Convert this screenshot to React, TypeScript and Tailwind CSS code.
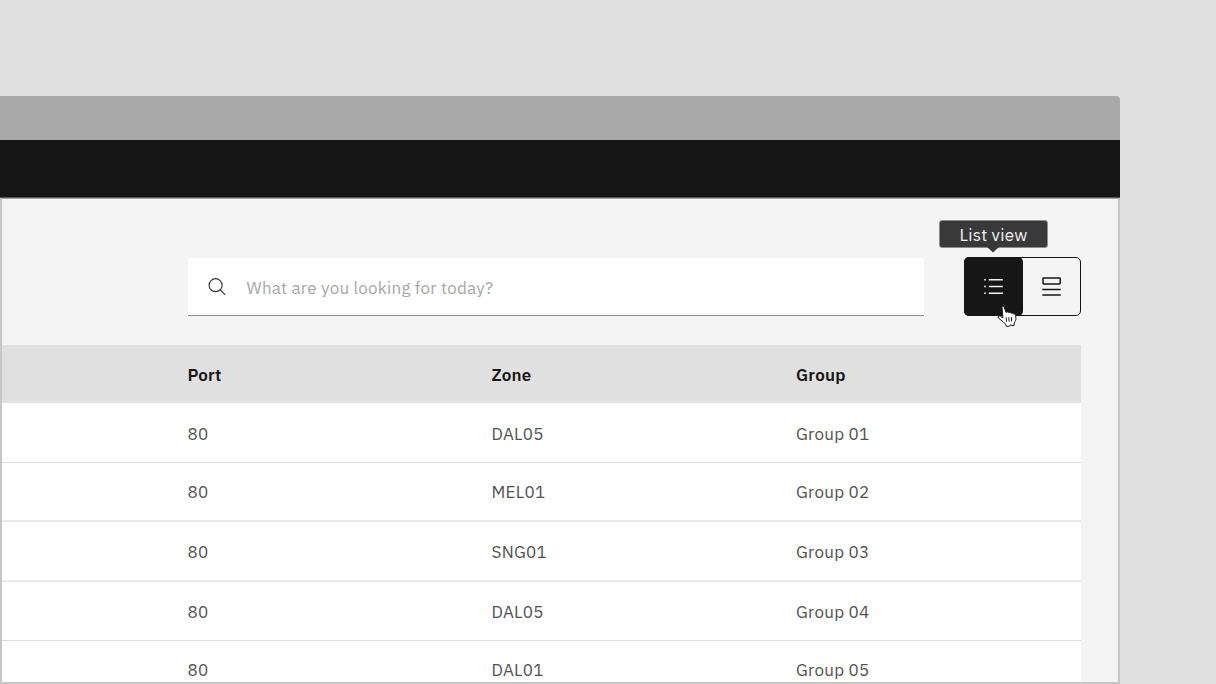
const rows = [
  { port: '80', zone: 'DAL05', group: 'Group 01', size: 'h-[60px] border-b border-[#dedede] pt-1' },
  { port: '80', zone: 'MEL01', group: 'Group 02', size: 'h-[59px] border-b-2 border-[#e9e9e9] pt-[3px]' },
  { port: '80', zone: 'SNG01', group: 'Group 03', size: 'h-[60px] border-b-2 border-[#ebebeb] pt-[3px]' },
  { port: '80', zone: 'DAL05', group: 'Group 04', size: 'h-[59px] border-b border-[#dedede] pt-[3px]' },
  { port: '80', zone: 'DAL01', group: 'Group 05', size: 'h-[59px] pt-px' },
];

function SearchIcon() {
  return (
    <svg width="20" height="20" viewBox="0 0 20 20" fill="none" stroke="#393939" strokeWidth="1.2">
      <circle cx="7.6" cy="8.2" r="6.5" />
      <path d="M12.2 12.8 17.2 17.8" />
    </svg>
  );
}

function ListIcon() {
  return (
    <svg width="20" height="20" viewBox="0 0 20 20" fill="#f4f4f4">
      <path d="M4.8 2h14v1.4h-14zM4.8 8.8h14v1.4h-14zM4.8 15.6h14V17h-14zM0.2 2h1.6v1.5H0.2zM0.2 8.8h1.6v1.5H0.2zM0.2 15.6h1.6v1.5H0.2z" />
    </svg>
  );
}

function CardIcon() {
  return (
    <svg width="20" height="20" viewBox="0 0 20 20" fill="none" stroke="#161616" strokeWidth="1.5">
      <rect x="1" y="0.9" width="17.2" height="6" rx="0.6" />
      <path d="M0.3 12.5h18.4M0.3 18h18.4" />
    </svg>
  );
}

function HandPointer() {
  return (
    <svg className="absolute left-[32px] top-[46px] z-10" width="21" height="24" viewBox="0 0 21 24">
      <path
        d="M5 3.4C4.9 2.2 6.6 1.8 7.2 3L9 8.4c.8-.8 2.1-.7 2.6.3.9-.7 2-.4 2.5.6 1-.6 2.2-.2 2.6.8.9-.3 1.7.3 1.9 1.2l.3 3c.1 1.8-.9 3-1.6 4.5l-.3 2.7-2.4.2-.8-1.1-1.2 1.6-3.3.1c-.3-2-1.6-2.9-2.8-4.2L1.4 14c-.9-1.4.5-2.7 1.9-1.8l2.6 1.7z"
        fill="#fff"
        stroke="#161616"
        strokeWidth="1"
        strokeLinejoin="round"
      />
      <path d="M9.2 13.4l.3 4.3M11.9 13.3l.2 4.3M14.5 13.2v4.3" stroke="#161616" strokeWidth="1" />
    </svg>
  );
}

export default function App() {
  return (
    <div className="h-[684px] w-[1216px] overflow-hidden bg-[#e0e0e0] pt-24 font-['IBM_Plex_Sans',Roboto,sans-serif] text-[17px]">
      <div className="flex h-[588px] w-[1120px] flex-col overflow-hidden rounded-tr-[4px]">
        <div className="h-11 shrink-0 bg-[#a8a8a8]" />
        <div className="h-[58px] shrink-0 border-b border-[#555] bg-[#161616]" />
        <main className="flex grow flex-col overflow-hidden border-2 border-t border-[#c6c6c6] border-t-[#a8a8a8] bg-[#f4f4f4]">
          <div className="flex h-[146px] shrink-0 pl-[186px] pr-[37px] pt-[58px]">
            <div className="mt-px flex h-[58px] w-[736px] items-center border-b border-[#8d8d8d] bg-white pl-5">
              <SearchIcon />
              <span className="ml-[18.5px] mt-[5px] whitespace-nowrap tracking-[0.23px] text-[#a8a8a8]">What are you looking for today?</span>
            </div>
            <div className="relative ml-10 flex h-[59px] w-[117px] rounded-[5px] border border-[#161616]">
              <button className="-my-px -ml-px flex w-[59px] items-center justify-center rounded-[5px] bg-[#161616]">
                <ListIcon />
              </button>
              <button className="flex grow items-center justify-center">
                <CardIcon />
              </button>
              <div className="absolute -left-[26px] -top-[38px] flex h-[28px] w-[109px] items-center justify-center rounded-[3px] border border-[#8d8d8d] bg-[#393939] pt-[4px] tracking-[0.25px] text-[#f4f4f4]">
                List view
                <svg className="absolute left-[47px] top-[26px]" width="12" height="6" viewBox="0 0 12 6">
                  <path d="M0 0h12L6 5.5z" fill="#393939" />
                </svg>
              </div>
              <HandPointer />
            </div>
          </div>
          <div className="mr-[37px] flex flex-col">
            <div className="flex h-[58px] shrink-0 items-center bg-[#e0e0e0] pl-[185.5px] pt-[4px] font-semibold tracking-[0.22px] text-[#161616]">
              <span className="w-[304px]">Port</span>
              <span className="w-[304.5px]">Zone</span>
              <span>Group</span>
            </div>
            {rows.map((row) => (
              <div key={row.group} className={`flex shrink-0 items-center bg-white pl-[185.5px] tracking-[0.25px] text-[#525252] ${row.size}`}>
                <span className="w-[304px]">{row.port}</span>
                <span className="w-[304.5px]">{row.zone}</span>
                <span>{row.group}</span>
              </div>
            ))}
          </div>
        </main>
      </div>
    </div>
  );
}
